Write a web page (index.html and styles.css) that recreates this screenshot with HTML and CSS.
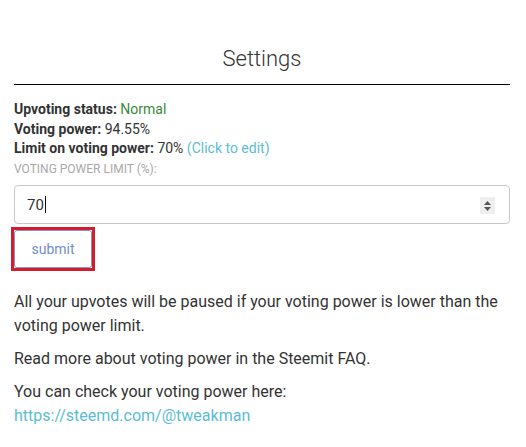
FILE: index.html
```html
<!DOCTYPE html>
<html>
<head>
<meta charset="utf-8">
<link rel="stylesheet" href="styles.css">
</head>
<body>
<div class="settings">
  <h1 class="title">Settings</h1>
  <div class="info">
    <div class="row"><b>Upvoting status:</b> <span class="ok">Normal</span></div>
    <div class="row"><b>Voting power:</b> 94.55%</div>
    <div class="row"><b>Limit on voting power:</b> 70% <a class="link">(Click to edit)</a></div>
    <div class="label">VOTING POWER LIMIT (%):</div>
  </div>
  <div class="input">
    <span class="value">70</span><span class="caret"></span>
    <span class="spin">
      <svg width="9" height="12" viewBox="0 0 9 12"><path d="M4.5 1 L8 5 L1 5 Z" fill="#555"/><path d="M1 7 L8 7 L4.5 11 Z" fill="#555"/></svg>
    </span>
  </div>
  <div class="actions">
    <div class="highlight"><button class="submit">submit</button></div>
  </div>
  <div class="text">
    <p>All your upvotes will be paused if your voting power is lower than the voting power limit.</p>
    <p>Read more about voting power in the Steemit FAQ.</p>
    <p>You can check your voting power here:<br><a class="link">https://steemd.com/@tweakman</a></p>
  </div>
</div>
</body>
</html>
```
FILE: styles.css
```css
* { box-sizing: border-box; }
html, body { margin: 0; padding: 0; background: #fff; }
body { font-family: Roboto, "Liberation Sans", sans-serif; color: #333; }
.settings { width: 496px; margin-left: 14px; padding-top: 46px; }
.title {
  margin: 0;
  font-weight: 300;
  font-size: 22px;
  line-height: 26.4px;
  text-align: center;
  color: #333;
  padding-bottom: 12px;
  border-bottom: 1px solid #000;
}
.info { margin-top: 15px; font-size: 14px; line-height: 19.5px; }
.info b { font-weight: 700; color: #333; }
.ok { color: #3b8a3b; }
.link { color: #5bbcd6; text-decoration: none; }
.label { font-size: 12px; color: #a8a8a8; margin-top: 1px; }
.input {
  position: relative;
  margin-top: 6px;
  height: 39px;
  border: 1px solid #c9c9c9;
  border-radius: 4px;
  display: flex;
  align-items: center;
  padding-left: 12px;
  font-size: 15px;
  color: #333;
}
.caret { display: inline-block; width: 1px; height: 17px; background: #111; margin-left: 1px; }
.spin {
  position: absolute;
  right: 14px;
  top: 11px;
  width: 15px;
  height: 17px;
  background: #efefef;
  display: flex;
  align-items: center;
  justify-content: center;
}
.actions { margin-top: 3px; display: flex; margin-left: -3px; }
.highlight { display: flex; border: 3px solid #cf1e2e; }
.submit {
  width: 78px;
  height: 38px;
  background: #fff;
  border: 1px solid #8b8fcf;
  border-radius: 3px;
  color: #6f8fc8;
  font-family: Roboto, "Liberation Sans", sans-serif;
  font-size: 14px;
  padding: 0;
}
.text { margin-top: 19px; font-size: 16px; line-height: 24px; }
.text p { margin: 0 0 9px; }
```
